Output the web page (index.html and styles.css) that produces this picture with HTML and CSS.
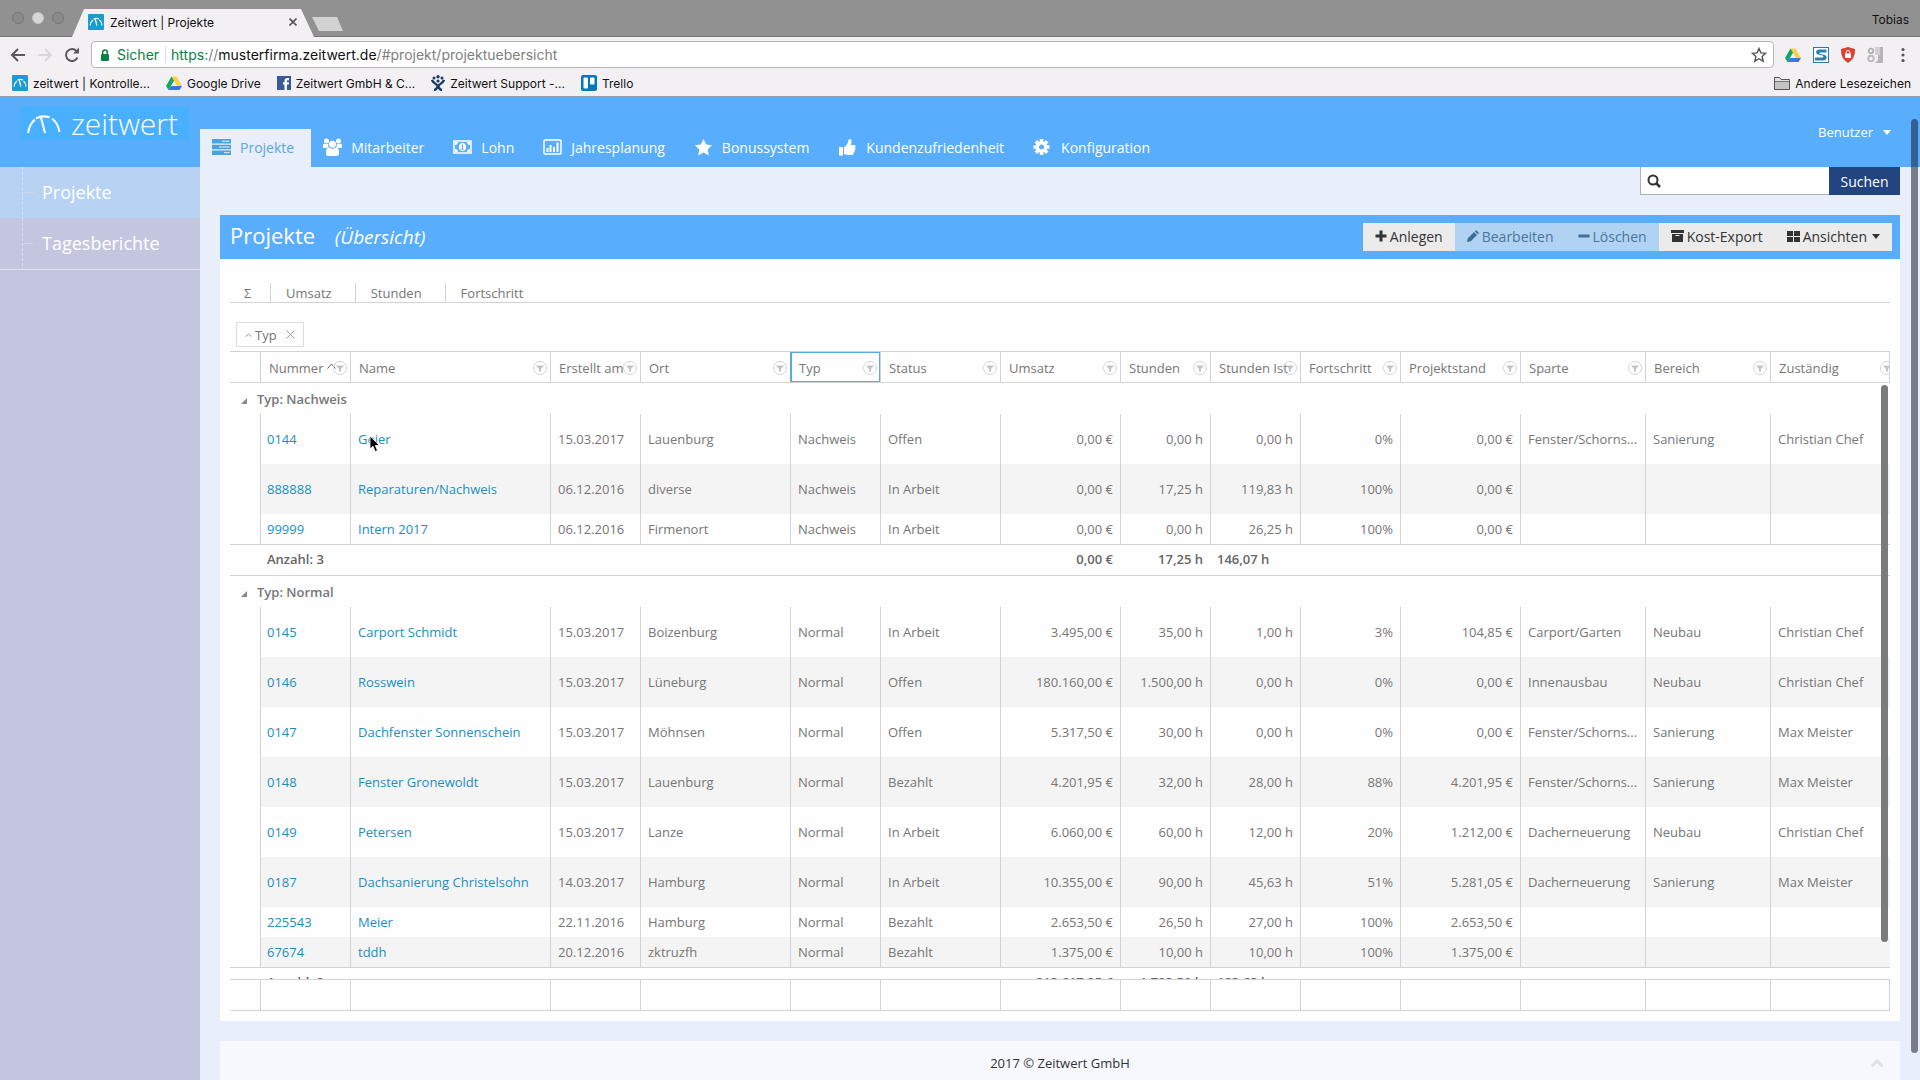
FILE: index.html
```
<!DOCTYPE html>
<html lang="de">
<head>
  <meta charset="UTF-8">
  <meta name="viewport" content="width=device-width, initial-scale=1">
  <title>Zeitwert | Projekte</title>
  <link rel="stylesheet" href="styles.css">
</head>
<body>
  <!-- Symbole -->
  <svg class="defs" width="0" height="0">
    <symbol id="zw" viewBox="0 0 16 16">
      <rect width="16" height="16" rx="1" fill="#1b9bd1"/>
      <path d="M2 11.500C2.300 9 3.300 7.300 5 6M5.500 5.300c2-1 4-1 5.500-.300M11.500 6c1.500 1.200 2.300 3 2.500 5.500M7.300 5L8.800 11.500" fill="none" stroke="#fff" stroke-width="1.200"/>
    </symbol>
    <symbol id="drive" viewBox="0 0 16 16">
      <path d="M5.500 1.500h5L16 11h-5z" fill="#ffcf48"/>
      <path d="M5.500 1.500L0 11l2.500 4L8 5.700z" fill="#11a861"/>
      <path d="M5 11h11l-2.500 4h-11z" fill="#3777e3"/>
    </symbol>
    <symbol id="filter" viewBox="0 0 14 14">
      <circle cx="7" cy="7" r="6.500" fill="none" stroke="#d3d3d3"/>
      <path d="M3 4.500h8L8 8V10.500H6V8z" fill="#c4c4c4"/>
    </symbol>
  </svg>

  <!-- Browserleiste -->
  <div class="browser">
    <div class="tab-strip">
      <div class="lights"><span></span><span class="mid"></span><span></span></div>
      <div class="tab">
        <svg width="16" height="16"><use href="#zw"/></svg>
        <span class="tab-title">Zeitwert | Projekte</span>
        <button class="tab-close" aria-label="Tab schließen"><svg width="8" height="8" viewBox="0 0 8 8"><path d="M0.500 0.500l7 7M7.500 0.500l-7 7" stroke="#555" stroke-width="1.600"/></svg></button>
      </div>
      <div class="new-tab"></div>
      <span class="user">Tobias</span>
    </div>
    <div class="toolbar">
      <button aria-label="Zurück"><svg width="16" height="16" viewBox="0 0 16 16"><path d="M15 8H2M8 2L2 8l6 6" fill="none" stroke="#5a5a5a" stroke-width="2"/></svg></button>
      <button aria-label="Vor"><svg width="16" height="16" viewBox="0 0 16 16"><path d="M1 8h13M8 2l6 6-6 6" fill="none" stroke="#d8d8d8" stroke-width="2"/></svg></button>
      <button aria-label="Neu laden"><svg width="16" height="16" viewBox="0 0 16 16"><path d="M13.500 10.500A6 6 0 1 1 12.500 4" fill="none" stroke="#5a5a5a" stroke-width="2"/><path d="M15 0.500V6.500H9z" fill="#5a5a5a"/></svg></button>
      <div class="address">
        <svg width="8" height="12" viewBox="0 0 8 12"><path d="M1 5h6a1 1 0 0 1 1 1v5a1 1 0 0 1-1 1H1a1 1 0 0 1-1-1V6a1 1 0 0 1 1-1z" fill="#0b8043"/><path d="M1.700 5V3.300a2.300 2.300 0 0 1 4.600 0V5" fill="none" stroke="#0b8043" stroke-width="1.500"/></svg>
        <span class="secure">Sicher</span>
        <span class="url"><span class="green">https:</span>//<b>musterfirma.zeitwert.de</b>/#projekt/projektuebersicht</span>
        <svg width="16" height="16" viewBox="0 0 16 16"><path d="M8 1.500l1.900 4.400 4.800.400-3.600 3.200 1.100 4.700L8 11.700l-4.200 2.500 1.100-4.700L1.300 6.300l4.800-.400z" fill="none" stroke="#555" stroke-width="1.400"/></svg>
      </div>
      <div class="extensions">
        <svg width="16" height="16"><use href="#drive"/></svg>
        <svg width="16" height="16" viewBox="0 0 16 16"><rect width="16" height="16" fill="#2f77a8"/><rect x="1" y="1" width="14" height="14" fill="#fff"/><path d="M13.500 2.500H6C2.500 2.500 2 7 5.500 7.700l4 .800c1.500.400 1 2-.500 2H2v3h8c4.500 0 5-5 1-5.800l-4-.800c-1-.300-.800-1.400.300-1.400h6.200z" fill="#2383bd"/></svg>
        <svg width="14" height="16" viewBox="0 0 14 16"><path d="M7 0l7 2c0 6-1 10-7 14C1 12 0 8 0 2z" fill="#d9432f"/><rect x="4" y="6.500" width="6" height="4.500" fill="#fff"/><path d="M5.200 7V5.300a1.800 1.800 0 0 1 3.600 0V7" fill="none" stroke="#fff"/></svg>
        <svg width="16" height="16" viewBox="0 0 16 16"><path d="M8 0h8v16H8l3-3V6z" fill="#b5b5b5"/><path d="M8 0h5v8H8z" fill="#d0d0d0"/><circle cx="4" cy="4" r="2.300" fill="none" stroke="#b0b0b0" stroke-width="1.800"/><circle cx="4" cy="11.500" r="2.800" fill="none" stroke="#bdbdbd" stroke-width="2"/></svg>
        <svg class="dots" width="4" height="16" viewBox="0 0 4 16"><circle cx="2" cy="2.500" r="1.600" fill="#555"/><circle cx="2" cy="8" r="1.600" fill="#555"/><circle cx="2" cy="13.500" r="1.600" fill="#555"/></svg>
      </div>
    </div>
    <div class="bookmarks">
      <a href="#"><svg width="16" height="16"><use href="#zw"/></svg>zeitwert | Kontrolle...</a>
      <a href="#"><svg width="16" height="16"><use href="#drive"/></svg>Google Drive</a>
      <a href="#"><svg width="14" height="14" viewBox="0 0 14 14"><rect width="14" height="14" fill="#3b5998"/><path d="M7.500 14V8.500H6V6.300h1.500V5c0-2 1-3 2.800-3H12v2.200h-1.200c-.700 0-.900.300-.900.900v1.200H12l-.300 2.200H9.900V14z" fill="#fff"/></svg>Zeitwert GmbH &amp; C...</a>
      <a href="#"><svg width="14" height="16" viewBox="0 0 14 16"><g fill="none" stroke="#1c3a66" stroke-width="2.400"><path d="M1 5c1 3 4 3.500 6 6 1.500 2 1 4 4 4"/><path d="M13 5c-1 3-4 3.500-6 6-1.500 2-1 4-4 4"/></g><circle cx="3" cy="3" r="1.500" fill="#1c3a66"/><circle cx="7" cy="1.800" r="1.700" fill="#1c3a66"/><circle cx="11" cy="3" r="1.500" fill="#1c3a66"/><circle cx="7" cy="6" r="1.600" fill="#1c3a66"/></svg>Zeitwert Support -...</a>
      <a href="#"><svg width="16" height="16" viewBox="0 0 16 16"><rect width="16" height="16" rx="2" fill="#0079bf"/><rect x="2.500" y="2.500" width="4.500" height="11" rx="1" fill="#fff"/><rect x="9" y="2.500" width="4.500" height="7" rx="1" fill="#fff"/></svg>Trello</a>
      <a href="#" class="other"><svg width="16" height="13" viewBox="0 0 16 13"><path d="M.500 12.500V.500h5l1.500 2h8.500v10z" fill="#e4e4e4" stroke="#555"/><path d="M1 5h14v7H1z" fill="#c4c4c4"/><path d="M.500 4.500h15" stroke="#777"/></svg>Andere Lesezeichen</a>
    </div>
  </div>

  <!-- Kopfbereich -->
  <header class="app-header">
    <a href="#" class="logo">
      <svg width="34" height="20" viewBox="0 0 34 20"><path d="M1 19C2 13 4 9 8 5.500M9 4.300C13 2 18 2 22.500 3.300M25 4.800C29.500 8 31.500 12 32.500 18M14 3.500L18 19" fill="none" stroke="#fff" stroke-width="2"/></svg>
      zeitwert
    </a>
    <nav class="main-nav">
      <a href="#" class="active"><svg width="19" height="16" viewBox="0 0 19 16"><path d="M0 0h19v4.500H0zM0 5.700h19v4.500H0zM0 11.500h19V16H0z" fill="#4aa3df"/><path d="M10 2.200h7.500M7 8h10.500M12 13.700h5.500" stroke="#e8eefa"/></svg>Projekte</a>
      <a href="#"><svg width="19" height="18" viewBox="0 0 19 18" fill="#fff"><circle cx="3.500" cy="3" r="2.500"/><circle cx="15.500" cy="3" r="2.500"/><path d="M0 10V7.500C0 6 1 5.500 2.500 6h2.800c-.500 2 0 3.300 1 4zM19 10V7.500c0-1.500-1-2-2.500-1.500h-2.800c.500 2 0 3.300-1 4z"/><circle cx="9.500" cy="6.300" r="3.500"/><path d="M3 16v-2.500c0-2.700 1.200-3.800 3.500-3.800 2 1.400 4 1.400 6 0 2.300 0 3.500 1.100 3.500 3.800V16c0 1.300-1 2-2.500 2h-8C4 18 3 17.300 3 16z"/></svg>Mitarbeiter</a>
      <a href="#"><svg width="19" height="14" viewBox="0 0 19 14"><rect x="1" y="1" width="17" height="12" fill="none" stroke="#fff" stroke-width="1.500"/><path d="M2 2h3a3 3 0 0 1-3 3zM17 2v3a3 3 0 0 1-3-3zM2 12V9a3 3 0 0 1 3 3zM17 12h-3a3 3 0 0 1 3-3z" fill="#fff"/><ellipse cx="9.500" cy="7" rx="3.500" ry="4" fill="#fff"/><path d="M8.500 5.500l1-.700v4.500M8.200 9.300h2.600" stroke="#58adfc" fill="none"/></svg>Lohn</a>
      <a href="#"><svg width="19" height="16" viewBox="0 0 19 16"><rect x="1" y="1" width="17" height="14" rx="1" fill="none" stroke="#fff" stroke-width="1.500"/><path d="M4.500 13V9M7.500 13V6M11 13V8M14.500 13V3.500" stroke="#fff" stroke-width="2"/></svg>Jahresplanung</a>
      <a href="#"><svg width="19" height="17" viewBox="0 0 19 17"><path d="M9.500 0l2.600 5.500 5.900.800-4.300 4.200 1.100 6L9.500 13.600 4.200 16.500l1.100-6L1 6.300l5.900-.800z" fill="#fff"/></svg>Bonussystem</a>
      <a href="#"><svg width="19" height="17" viewBox="0 0 19 17"><path d="M1 8h4v8.500H1zM6 8c2.500-1 3.500-3.500 4-5 .300-1.500.500-3 2-3 2 0 2 2.500.700 6H16c2 0 2 2 1 2.500 1 .800.700 2.200-.500 2.600.700 1 .200 2-.800 2.400.300 1.500-.500 2.500-2.200 2.500-3 0-4.500 0-7.500-1z" fill="#fff"/></svg>Kundenzufriedenheit</a>
      <a href="#"><svg width="19" height="16" viewBox="0 0 19 16"><g stroke="#fff" stroke-width="3.600"><path d="M8.500 0v16M.500 8h16M2.800 2.300l11.400 11.400M14.200 2.300L2.800 13.700"/></g><circle cx="8.500" cy="8" r="5.800" fill="#fff"/><circle cx="8.500" cy="8" r="2.500" fill="#58adfc"/></svg>Konfiguration</a>
    </nav>
    <button class="user-menu">Benutzer <span class="caret"></span></button>
  </header>

  <div class="page">
    <aside class="sidebar">
      <a href="#" class="active">Projekte</a>
      <a href="#">Tagesberichte</a>
    </aside>

    <main>
      <form class="search">
        <label for="suche" aria-label="Suche"><svg width="14" height="14" viewBox="0 0 14 14"><circle cx="6" cy="6" r="4.500" fill="none" stroke="#333" stroke-width="2"/><path d="M9 9l4 4" stroke="#333" stroke-width="2.500"/></svg></label>
        <input type="text" id="suche">
        <button type="button">Suchen</button>
      </form>

      <section class="card">
        <div class="card-header">
          <h1>Projekte <small>(Übersicht)</small></h1>
          <div class="actions">
            <button><svg width="12" height="12" viewBox="0 0 12 12"><path d="M6 0.500v11M0.500 6h11" stroke="#333" stroke-width="3"/></svg>Anlegen</button>
            <button disabled><svg width="12" height="12" viewBox="0 0 12 12"><path d="M0 12l.800-3.800L7 2l3 3-6.200 6.200zM7.800 1.200L9 0l3 3-1.200 1.200z" fill="#3f6d94"/></svg>Bearbeiten</button>
            <button disabled><svg width="12" height="12" viewBox="0 0 12 12"><path d="M0.500 6h11" stroke="#3f6d94" stroke-width="3"/></svg>Löschen</button>
            <button><svg width="13" height="12" viewBox="0 0 13 12"><path d="M0 0h13v3H0zM1 4h11v8H1z" fill="#333"/><path d="M4.500 5.500h4" stroke="#ebebeb"/></svg>Kost-Export</button>
            <button><svg width="13" height="11" viewBox="0 0 13 11"><path d="M0 0h6v5H0zM7 0h6v5H7zM0 6h6v5H0zM7 6h6v5H7z" fill="#333"/></svg>Ansichten <span class="caret"></span></button>
          </div>
        </div>

        <div class="card-body">
          <div class="sums">
            <span class="sigma">Σ</span>
            <span>Umsatz</span>
            <span>Stunden</span>
            <span>Fortschritt</span>
          </div>

          <div class="grouping">
            <button class="chip"><svg width="7" height="4" viewBox="0 0 7 4"><path d="M.500 3.500L3.500 1l3 2.500" fill="none" stroke="#999"/></svg>Typ<svg class="remove" width="9" height="9" viewBox="0 0 9 9"><path d="M.500.500l8 8M8.500.500l-8 8" stroke="#999"/></svg></button>
          </div>

          <div class="grid">
            <table class="grid-head">
              <colgroup><col class="c30"><col class="c90"><col class="c200"><col class="c90"><col class="c150"><col class="c90"><col class="c120"><col class="c120"><col class="c90"><col class="c90"><col class="c100"><col class="c120"><col class="c125"><col class="c125"><col></colgroup>
              <thead>
                <tr>
                  <th></th>
                  <th><div class="th"><span>Nummer <svg width="9" height="6" viewBox="0 0 9 6" class="sort"><path d="M.500 5.500l4-4.500 4 4.500" fill="none" stroke="#666"/></svg></span><svg width="14" height="14"><use href="#filter"/></svg></div></th>
                  <th><div class="th"><span>Name</span><svg width="14" height="14"><use href="#filter"/></svg></div></th>
                  <th><div class="th"><span>Erstellt am</span><svg width="14" height="14"><use href="#filter"/></svg></div></th>
                  <th><div class="th"><span>Ort</span><svg width="14" height="14"><use href="#filter"/></svg></div></th>
                  <th class="focus"><div class="th"><span>Typ</span><svg width="14" height="14"><use href="#filter"/></svg></div></th>
                  <th><div class="th"><span>Status</span><svg width="14" height="14"><use href="#filter"/></svg></div></th>
                  <th><div class="th"><span>Umsatz</span><svg width="14" height="14"><use href="#filter"/></svg></div></th>
                  <th><div class="th"><span>Stunden</span><svg width="14" height="14"><use href="#filter"/></svg></div></th>
                  <th><div class="th"><span>Stunden Ist</span><svg width="14" height="14"><use href="#filter"/></svg></div></th>
                  <th><div class="th"><span>Fortschritt</span><svg width="14" height="14"><use href="#filter"/></svg></div></th>
                  <th><div class="th"><span>Projektstand</span><svg width="14" height="14"><use href="#filter"/></svg></div></th>
                  <th><div class="th"><span>Sparte</span><svg width="14" height="14"><use href="#filter"/></svg></div></th>
                  <th><div class="th"><span>Bereich</span><svg width="14" height="14"><use href="#filter"/></svg></div></th>
                  <th class="last"><div class="th"><span>Zuständig</span><svg width="14" height="14"><use href="#filter"/></svg></div></th>
                </tr>
              </thead>
            </table>

            <div class="grid-scroll">
              <table class="grid-body">
                <colgroup><col class="c30"><col class="c90"><col class="c200"><col class="c90"><col class="c150"><col class="c90"><col class="c120"><col class="c120"><col class="c90"><col class="c90"><col class="c100"><col class="c120"><col class="c125"><col class="c125"><col></colgroup>
                <tbody>
                  <tr class="group"><td colspan="15"><span class="fold"></span>Typ: Nachweis</td></tr>
                  <tr><td></td><td><a href="#">0144</a></td><td><a href="#">Geier</a></td><td>15.03.2017</td><td>Lauenburg</td><td>Nachweis</td><td>Offen</td><td class="num">0,00 €</td><td class="num">0,00 h</td><td class="num">0,00 h</td><td class="num">0%</td><td class="num">0,00 €</td><td>Fenster/Schorns...</td><td>Sanierung</td><td>Christian Chef</td></tr>
                  <tr class="alt"><td></td><td><a href="#">888888</a></td><td><a href="#">Reparaturen/Nachweis</a></td><td>06.12.2016</td><td>diverse</td><td>Nachweis</td><td>In Arbeit</td><td class="num">0,00 €</td><td class="num">17,25 h</td><td class="num">119,83 h</td><td class="num">100%</td><td class="num">0,00 €</td><td></td><td></td><td></td></tr>
                  <tr class="short"><td></td><td><a href="#">99999</a></td><td><a href="#">Intern 2017</a></td><td>06.12.2016</td><td>Firmenort</td><td>Nachweis</td><td>In Arbeit</td><td class="num">0,00 €</td><td class="num">0,00 h</td><td class="num">26,25 h</td><td class="num">100%</td><td class="num">0,00 €</td><td></td><td></td><td></td></tr>
                  <tr class="total"><td></td><td colspan="6">Anzahl: 3</td><td class="num">0,00 €</td><td class="num">17,25 h</td><td>146,07 h</td><td colspan="5"></td></tr>
                  <tr class="group"><td colspan="15"><span class="fold"></span>Typ: Normal</td></tr>
                  <tr><td></td><td><a href="#">0145</a></td><td><a href="#">Carport Schmidt</a></td><td>15.03.2017</td><td>Boizenburg</td><td>Normal</td><td>In Arbeit</td><td class="num">3.495,00 €</td><td class="num">35,00 h</td><td class="num">1,00 h</td><td class="num">3%</td><td class="num">104,85 €</td><td>Carport/Garten</td><td>Neubau</td><td>Christian Chef</td></tr>
                  <tr class="alt"><td></td><td><a href="#">0146</a></td><td><a href="#">Rosswein</a></td><td>15.03.2017</td><td>Lüneburg</td><td>Normal</td><td>Offen</td><td class="num">180.160,00 €</td><td class="num">1.500,00 h</td><td class="num">0,00 h</td><td class="num">0%</td><td class="num">0,00 €</td><td>Innenausbau</td><td>Neubau</td><td>Christian Chef</td></tr>
                  <tr><td></td><td><a href="#">0147</a></td><td><a href="#">Dachfenster Sonnenschein</a></td><td>15.03.2017</td><td>Möhnsen</td><td>Normal</td><td>Offen</td><td class="num">5.317,50 €</td><td class="num">30,00 h</td><td class="num">0,00 h</td><td class="num">0%</td><td class="num">0,00 €</td><td>Fenster/Schorns...</td><td>Sanierung</td><td>Max Meister</td></tr>
                  <tr class="alt"><td></td><td><a href="#">0148</a></td><td><a href="#">Fenster Gronewoldt</a></td><td>15.03.2017</td><td>Lauenburg</td><td>Normal</td><td>Bezahlt</td><td class="num">4.201,95 €</td><td class="num">32,00 h</td><td class="num">28,00 h</td><td class="num">88%</td><td class="num">4.201,95 €</td><td>Fenster/Schorns...</td><td>Sanierung</td><td>Max Meister</td></tr>
                  <tr><td></td><td><a href="#">0149</a></td><td><a href="#">Petersen</a></td><td>15.03.2017</td><td>Lanze</td><td>Normal</td><td>In Arbeit</td><td class="num">6.060,00 €</td><td class="num">60,00 h</td><td class="num">12,00 h</td><td class="num">20%</td><td class="num">1.212,00 €</td><td>Dacherneuerung</td><td>Neubau</td><td>Christian Chef</td></tr>
                  <tr class="alt"><td></td><td><a href="#">0187</a></td><td><a href="#">Dachsanierung Christelsohn</a></td><td>14.03.2017</td><td>Hamburg</td><td>Normal</td><td>In Arbeit</td><td class="num">10.355,00 €</td><td class="num">90,00 h</td><td class="num">45,63 h</td><td class="num">51%</td><td class="num">5.281,05 €</td><td>Dacherneuerung</td><td>Sanierung</td><td>Max Meister</td></tr>
                  <tr class="short"><td></td><td><a href="#">225543</a></td><td><a href="#">Meier</a></td><td>22.11.2016</td><td>Hamburg</td><td>Normal</td><td>Bezahlt</td><td class="num">2.653,50 €</td><td class="num">26,50 h</td><td class="num">27,00 h</td><td class="num">100%</td><td class="num">2.653,50 €</td><td></td><td></td><td></td></tr>
                  <tr class="short alt"><td></td><td><a href="#">67674</a></td><td><a href="#">tddh</a></td><td>20.12.2016</td><td>zktruzfh</td><td>Normal</td><td>Bezahlt</td><td class="num">1.375,00 €</td><td class="num">10,00 h</td><td class="num">10,00 h</td><td class="num">100%</td><td class="num">1.375,00 €</td><td></td><td></td><td></td></tr>
                  <tr class="total"><td></td><td colspan="6">Anzahl: 8</td><td class="num">213.617,95 €</td><td class="num">1.783,50 h</td><td>123,63 h</td><td colspan="5"></td></tr>
                </tbody>
              </table>
              <span class="grid-scrollbar"></span>
            </div>

            <table class="grid-foot">
              <colgroup><col class="c30"><col class="c90"><col class="c200"><col class="c90"><col class="c150"><col class="c90"><col class="c120"><col class="c120"><col class="c90"><col class="c90"><col class="c100"><col class="c120"><col class="c125"><col class="c125"><col></colgroup>
              <tbody>
                <tr><td></td><td></td><td></td><td></td><td></td><td></td><td></td><td></td><td></td><td></td><td></td><td></td><td></td><td></td><td></td></tr>
              </tbody>
            </table>
          </div>
        </div>
      </section>

      <footer>
        <span class="copyright">2017 © Zeitwert GmbH</span>
        <a href="#" aria-label="Nach oben"><svg width="14" height="9" viewBox="0 0 14 9"><path d="M1.500 7.500L7 2l5.500 5.500" fill="none" stroke="#dfe2ea" stroke-width="3"/></svg></a>
      </footer>
    </main>
  </div>

  <span class="page-scrollbar"></span>
  <svg class="cursor" width="12" height="18" viewBox="0 0 12 18"><path d="M1 1v13l3-2.800L6.200 16.500l2.300-1L6.300 10.500H10.500z" fill="#000" stroke="#fff" stroke-width=".800"/></svg>
</body>
</html>
```
FILE: styles.css
```
* {
  box-sizing: border-box;
}
body {
  margin: 0;
  height: 100vh;
  display: flex;
  flex-direction: column;
  overflow: hidden;
  font-family: "Open Sans", sans-serif;
  font-size: 14px;
  color: #333;
  background: #e8eefa;
}
a {
  text-decoration: none;
}
button {
  font: inherit;
  color: inherit;
  border: none;
  background: none;
  padding: 0;
  cursor: pointer;
}
svg {
  flex: none;
  display: block;
}
.defs {
  position: absolute;
}
.caret {
  border: 4px solid transparent;
  border-top: 5px solid currentColor;
  border-bottom: none;
}

/* Browser */
.browser {
  flex: none;
  font-family: Inter, sans-serif;
  font-size: 12px;
  color: #111;
  background: #f2f0f3;
  border-bottom: 1px solid #8f9fb5;
}
.tab-strip {
  height: 37px;
  display: flex;
  align-items: flex-end;
  background: #919191;
  border-bottom: 1px solid #777;
}
.lights {
  display: flex;
  align-items: center;
  gap: 8px;
  height: 36px;
  width: 72px;
  padding-left: 12px;
}
.lights span {
  width: 12px;
  height: 12px;
  border: 1px solid #777;
  border-radius: 50%;
  background: #8a8a8a;
}
.lights .mid {
  background: #d6d6d6;
  border-color: #c4c4c4;
}
.tab {
  width: 242px;
  height: 28px;
  margin-bottom: -1px;
  padding: 0 17px 2px 16px;
  display: flex;
  align-items: center;
  gap: 6px;
  background: #f2f0f3;
  clip-path: polygon(12px 0, 229px 0, 100% 100%, 0 100%);
}
.tab-title {
  flex: 1;
}
.new-tab {
  width: 31px;
  height: 14px;
  margin: 0 0 5px -2px;
  background: #d2d2d2;
  clip-path: polygon(0 0, 25px 0, 100% 100%, 7px 100%);
}
.user {
  margin-left: auto;
  padding-right: 11px;
  line-height: 32px;
}
.toolbar {
  height: 35px;
  padding: 4px 15px 4px 10px;
  display: flex;
  align-items: center;
  gap: 11px;
}
.address {
  flex: 1;
  height: 27px;
  padding: 0 6px 0 9px;
  display: flex;
  align-items: center;
  background: #fff;
  border: 1px solid #b5b5b5;
  border-radius: 4px;
  font-size: 14px;
}
.secure {
  margin-left: 8px;
  padding-right: 6px;
  border-right: 1px solid #ddd;
  color: #0b8043;
}
.url {
  flex: 1;
  margin-left: 5px;
  color: #808080;
}
.url b {
  font-weight: 400;
  color: #111;
}
.green {
  color: #0b8043;
}
.extensions {
  display: flex;
  align-items: center;
  gap: 12px;
}
.dots {
  margin-left: 6px;
}
.bookmarks {
  height: 24px;
  padding: 0 9px 2px 12px;
  display: flex;
  align-items: center;
  gap: 16px;
}
.bookmarks a {
  display: flex;
  align-items: center;
  gap: 5px;
  color: #111;
}
.bookmarks .other {
  margin-left: auto;
}

/* Kopfbereich */
.app-header {
  flex: none;
  height: 70px;
  display: flex;
  align-items: flex-end;
  background: #58adfc;
  color: #fff;
}
.logo {
  align-self: flex-start;
  width: 170px;
  height: 33px;
  margin: 10px 10px 0 20px;
  padding-left: 7px;
  display: flex;
  align-items: center;
  gap: 10px;
  background: #48b0ff;
  color: #fff;
  font-size: 30px;
  font-weight: 300;
  line-height: 33px;
}
.main-nav {
  display: flex;
}
.main-nav a {
  height: 38px;
  padding: 0 17px 2px 12px;
  display: flex;
  align-items: center;
  gap: 9px;
  color: #fff;
}
.main-nav .active {
  background: #e8eefa;
  color: #58a9dc;
}
.user-menu {
  align-self: flex-start;
  display: flex;
  align-items: center;
  gap: 10px;
  margin: 25px 29px 0 auto;
  font-size: 13px;
  line-height: 20px;
}

/* Seitenleiste */
.page {
  flex: 1;
  display: flex;
  min-height: 0;
}
.sidebar {
  flex: none;
  width: 200px;
  background: #c4c6e0;
}
.sidebar a {
  display: flex;
  align-items: center;
  height: 51px;
  padding: 0 0 2px 42px;
  background:
    repeating-linear-gradient(#d9dfef 0 3px, transparent 3px 5px) 22px 0 / 1px 100% no-repeat,
    linear-gradient(#d0d4ea, #d0d4ea) 24px 50% / 10px 1px no-repeat;
  color: #fff;
  font-size: 18px;
}
.sidebar .active {
  background-color: #b7d2f3;
}
.sidebar a:last-child {
  height: 52px;
  border-bottom: 1px solid #e0e1f0;
}

/* Inhalt */
main {
  flex: 1;
  min-width: 0;
  padding: 0 20px;
  display: flex;
  flex-direction: column;
}
.search {
  display: flex;
  justify-content: flex-end;
  height: 28px;
  margin-bottom: 20px;
}
.search label {
  display: flex;
  align-items: center;
  padding-left: 6px;
  background: #fff;
  border: 1px solid #a9b2bf;
  border-width: 0 0 1px 1px;
}
.search input {
  width: 168px;
  border: none;
  border-bottom: 1px solid #a9b2bf;
  background: #fff;
  font: inherit;
}
.search button {
  width: 71px;
  background: #23457f;
  color: #fff;
}
.card {
  background: #fefefe;
}
.card-header {
  height: 44px;
  padding: 0 8px 0 10px;
  display: flex;
  align-items: center;
  justify-content: space-between;
  background: #58adfc;
}
h1 {
  margin: 0;
  padding-bottom: 2px;
  color: #fff;
  font-size: 22px;
  font-weight: 400;
  line-height: 30px;
}
h1 small {
  margin-left: 14px;
  font-size: 19px;
  font-style: italic;
}
.actions {
  display: flex;
}
.actions button {
  height: 28px;
  padding: 0 12px 2px;
  display: flex;
  align-items: center;
  gap: 3px;
  background: #ebebeb;
}
.actions button:disabled {
  background: #b1d3f3;
  color: #4a7599;
}
.actions .caret {
  margin-left: 2px;
}
.card-body {
  padding: 24px 10px 10px;
}
.sums {
  display: flex;
  height: 20px;
  border-bottom: 1px solid #d3d3d3;
  font-size: 13px;
  line-height: 21px;
  color: #777;
}
.sums span {
  padding: 0 23px 0 15px;
  border-left: 1px solid #d3d3d3;
}
.sums .sigma {
  width: 40px;
  padding: 0 0 0 14px;
  border: none;
}
.grouping {
  padding: 19px 6px 4px;
}
.chip {
  height: 25px;
  padding: 0 8px;
  display: flex;
  align-items: center;
  gap: 3px;
  border: 1px solid #ddd;
  font-size: 13px;
  color: #777;
}
.chip .remove {
  margin-left: 6px;
}

/* Tabelle */
table {
  width: 100%;
  table-layout: fixed;
  border-collapse: separate;
  border-spacing: 0;
  font-size: 13px;
  color: #777;
}
.c30 { width: 30px; }
.c90 { width: 90px; }
.c100 { width: 100px; }
.c120 { width: 120px; }
.c125 { width: 125px; }
.c150 { width: 150px; }
.c200 { width: 200px; }
.grid-head,
.grid-foot {
  border: 1px solid #d3d3d3;
  border-left: none;
}
th {
  height: 30px;
  padding: 2px 3px 0 8px;
  border-left: 1px solid #d3d3d3;
  font-weight: 400;
  text-align: left;
}
th:first-child,
td:first-child {
  border-left: none;
}
.th {
  display: flex;
  align-items: center;
}
.th span {
  flex: 1;
  min-width: 0;
  white-space: nowrap;
}
.sort {
  display: inline-block;
  vertical-align: 4px;
}
.focus {
  border-left-color: #58a9e0;
  box-shadow: inset 1px 1px #58a9e0, inset -1px -1px #58a9e0;
}
.last {
  overflow: hidden;
}
.last .th {
  margin-right: -8px;
}
td {
  height: 50px;
  padding: 0 7px;
  border-left: 1px solid #d3d3d3;
  white-space: nowrap;
}
td:nth-child(2) {
  padding-left: 6px;
}
td a {
  color: #1b8fbf;
}
.num {
  text-align: right;
}
.alt td:not(:first-child) {
  background: #f4f4f4;
}
.short td,
.grid-foot td {
  height: 30px;
}
.group td {
  height: 31px;
  padding-left: 11px;
  font-weight: 600;
}
.fold {
  display: inline-block;
  margin-right: 10px;
  border: 3px solid #888;
  border-top-color: transparent;
  border-left-color: transparent;
}
.total td {
  height: 32px;
  padding-bottom: 2px;
  border: 1px solid #d3d3d3;
  border-width: 1px 0;
  font-weight: 600;
  color: #666;
}
.total td:nth-child(2) {
  padding-left: 7px;
}
.grid-scroll {
  position: relative;
  height: 596px;
  overflow: hidden;
}
.grid-scrollbar {
  position: absolute;
  top: 2px;
  right: 2px;
  width: 7px;
  height: 557px;
  border-radius: 4px;
  background: #7b7b7b;
}

footer {
  flex: 1;
  margin-top: 20px;
  padding: 13px 16px 0 30px;
  display: flex;
  justify-content: center;
  background: #f6f8fd;
  font-size: 13px;
  line-height: 18px;
}
.copyright {
  flex: 1;
  text-align: center;
}
footer a {
  padding-top: 5px;
}

/* liegt über der Seite */
.page-scrollbar {
  position: absolute;
  top: 119px;
  right: 2px;
  width: 7px;
  height: 934px;
  border-radius: 4px;
  background: linear-gradient(#33608f 48px, #7a7c87 48px);
}
.cursor {
  position: absolute;
  left: 369px;
  top: 435px;
}
```
